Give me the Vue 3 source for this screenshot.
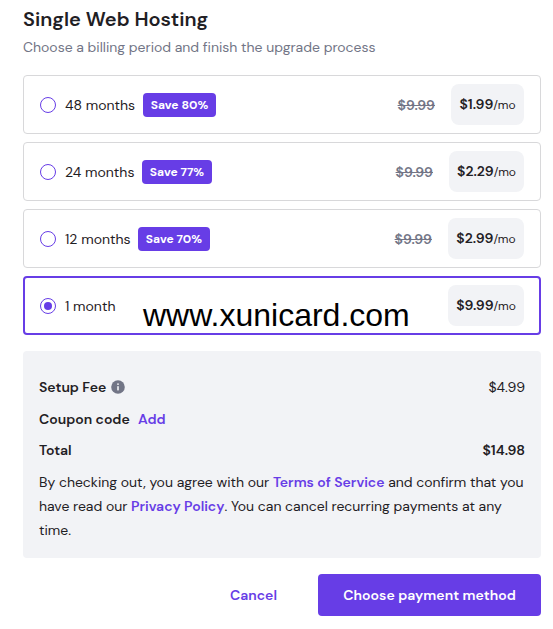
<template>
    <div class="checkout">
        <h1 class="title">Single Web Hosting</h1>
        <p class="subtitle">Choose a billing period and finish the upgrade process</p>

        <div class="periods">
            <div v-for="period in periods" :key="period.id"
                :class="['period', period.id, { selected: period.id === selected }]" @click="selected = period.id">
                <span class="radio"></span>
                <span class="period-label">{{ period.label }}</span>
                <span v-if="period.badge" class="badge">{{ period.badge }}</span>
                <span class="spacer"></span>
                <span v-if="period.oldPrice" class="old-price">{{ period.oldPrice }}</span>
                <span class="price"><b>{{ period.price }}</b><span class="unit">/mo</span></span>
            </div>
            <span class="watermark">www.xunicard.com</span>
        </div>

        <div class="summary">
            <div class="row">
                <span class="row-label setup">Setup Fee</span>
                <svg class="info" width="14" height="14" viewBox="0 0 14 14">
                    <circle cx="7" cy="7" r="6.8" fill="#727586" />
                    <rect x="6.2" y="3.4" width="1.6" height="1.5" fill="#f2f3f6" />
                    <rect x="6.2" y="6.2" width="1.6" height="4.2" fill="#f2f3f6" />
                </svg>
                <span class="amount">$4.99</span>
            </div>
            <div class="row">
                <span class="row-label coupon">Coupon code</span>
                <a class="link add">Add</a>
            </div>
            <div class="row total">
                <span class="row-label">Total</span>
                <span class="amount">$14.98</span>
            </div>
            <p class="terms">
                <span class="line">By checking out, you agree with our <a class="link">Terms of Service</a> and confirm that you</span>
                <span class="line">have read our <a class="link">Privacy Policy</a>. You can cancel recurring payments at any</span>
                <span class="line">time.</span>
            </p>
        </div>

        <div class="actions">
            <button class="btn cancel">Cancel</button>
            <button class="btn submit">Choose payment method</button>
        </div>
    </div>
</template>

<script setup>
import { ref } from 'vue'

const selected = ref('m1')

const periods = [
    { id: 'm48', label: '48 months', badge: 'Save 80%', oldPrice: '$9.99', price: '$1.99' },
    { id: 'm24', label: '24 months', badge: 'Save 77%', oldPrice: '$9.99', price: '$2.29' },
    { id: 'm12', label: '12 months', badge: 'Save 70%', oldPrice: '$9.99', price: '$2.99' },
    { id: 'm1', label: '1 month', price: '$9.99' }
]
</script>

<style>
body {
    background: #fff;
}
</style>

<style scoped>
.checkout {
    box-sizing: border-box;
    width: 553px;
    height: 629px;
    padding: 5px 12px 0 23px;
    overflow: hidden;
    color: #1f2024;
    font-family: "DM Sans", Inter, sans-serif;
    font-size: 14px;
    line-height: 24px;
}

.title {
    margin: 0;
    font-size: 20px;
    font-weight: 600;
    line-height: 28px;
    white-space: nowrap;
}

.subtitle {
    margin: 2px 0 0;
    color: #727586;
    letter-spacing: -0.015px;
    white-space: nowrap;
}

.periods {
    position: relative;
    display: flex;
    flex-direction: column;
    gap: 8px;
    margin-top: 16px;
}

.period {
    display: flex;
    align-items: center;
    box-sizing: border-box;
    height: 59px;
    padding: 0 16px;
    border: 1px solid #d8d8da;
    border-radius: 4px;
    white-space: nowrap;
    cursor: pointer;
}

.period.selected {
    padding: 0 15px;
    border: 2px solid #673de6;
}

.radio {
    display: flex;
    align-items: center;
    justify-content: center;
    box-sizing: border-box;
    width: 16px;
    height: 16px;
    margin-right: 9px;
    border: 1px solid #673de6;
    border-radius: 50%;
}

.selected .radio::after {
    content: "";
    width: 8px;
    height: 8px;
    border-radius: 50%;
    background: #673de6;
}

.badge {
    box-sizing: border-box;
    width: 73px;
    margin-left: 8px;
    border-radius: 4px;
    background: #673de6;
    color: #fff;
    font-size: 12px;
    font-weight: 700;
    text-align: center;
}

.m48 .period-label {
    width: 70px;
}

.m24 .period-label {
    width: 69px;
}

.m24 .badge {
    width: 70px;
}

.m12 .period-label {
    width: 65px;
}

.m12 .badge {
    width: 72px;
}

.spacer {
    flex: 1;
}

.old-price {
    margin-right: 16px;
    color: #727586;
    font-weight: 600;
    text-decoration: line-through;
}

.price {
    box-sizing: border-box;
    width: 76px;
    height: 41px;
    border-radius: 8px;
    background: #f2f3f6;
    line-height: 41px;
    text-align: center;
}

.price b {
    font-weight: 600;
}

.m48 .price {
    width: 73px;
}

.m24 .price {
    width: 75px;
}

.unit {
    font-size: 12px;
}

.watermark {
    position: absolute;
    top: 221px;
    left: 120px;
    color: #000;
    font-family: "Liberation Sans", Arial, sans-serif;
    font-size: 32px;
    line-height: 38px;
}

.summary {
    box-sizing: border-box;
    height: 207px;
    margin-top: 16px;
    padding: 24px 16px 16px;
    border-radius: 4px;
    background: #f2f3f6;
}

.row {
    display: flex;
    align-items: center;
    height: 24px;
    margin-bottom: 8px;
    white-space: nowrap;
}

.row.total {
    margin-top: -1px;
    font-weight: 600;
}

.row-label {
    font-weight: 600;
}

.setup {
    width: 68px;
}

.info {
    margin-left: 4px;
}

.coupon {
    width: 91px;
}

.add {
    margin-left: 8px;
}

.amount {
    margin-left: auto;
}

.link {
    color: #673de6;
    font-weight: 600;
}

.terms {
    margin: 0;
    letter-spacing: -0.015px;
}

.line {
    display: block;
    white-space: nowrap;
}

.actions {
    display: flex;
    justify-content: flex-end;
    margin-top: 16px;
}

.btn {
    height: 42px;
    padding: 0;
    border: 0;
    border-radius: 4px;
    font-family: inherit;
    font-size: 14px;
    font-weight: 600;
    white-space: nowrap;
}

.cancel {
    width: 129px;
    background: transparent;
    color: #673de6;
}

.submit {
    width: 223px;
    background: #673de6;
    color: #fff;
    letter-spacing: 0.03px;
}
</style>
